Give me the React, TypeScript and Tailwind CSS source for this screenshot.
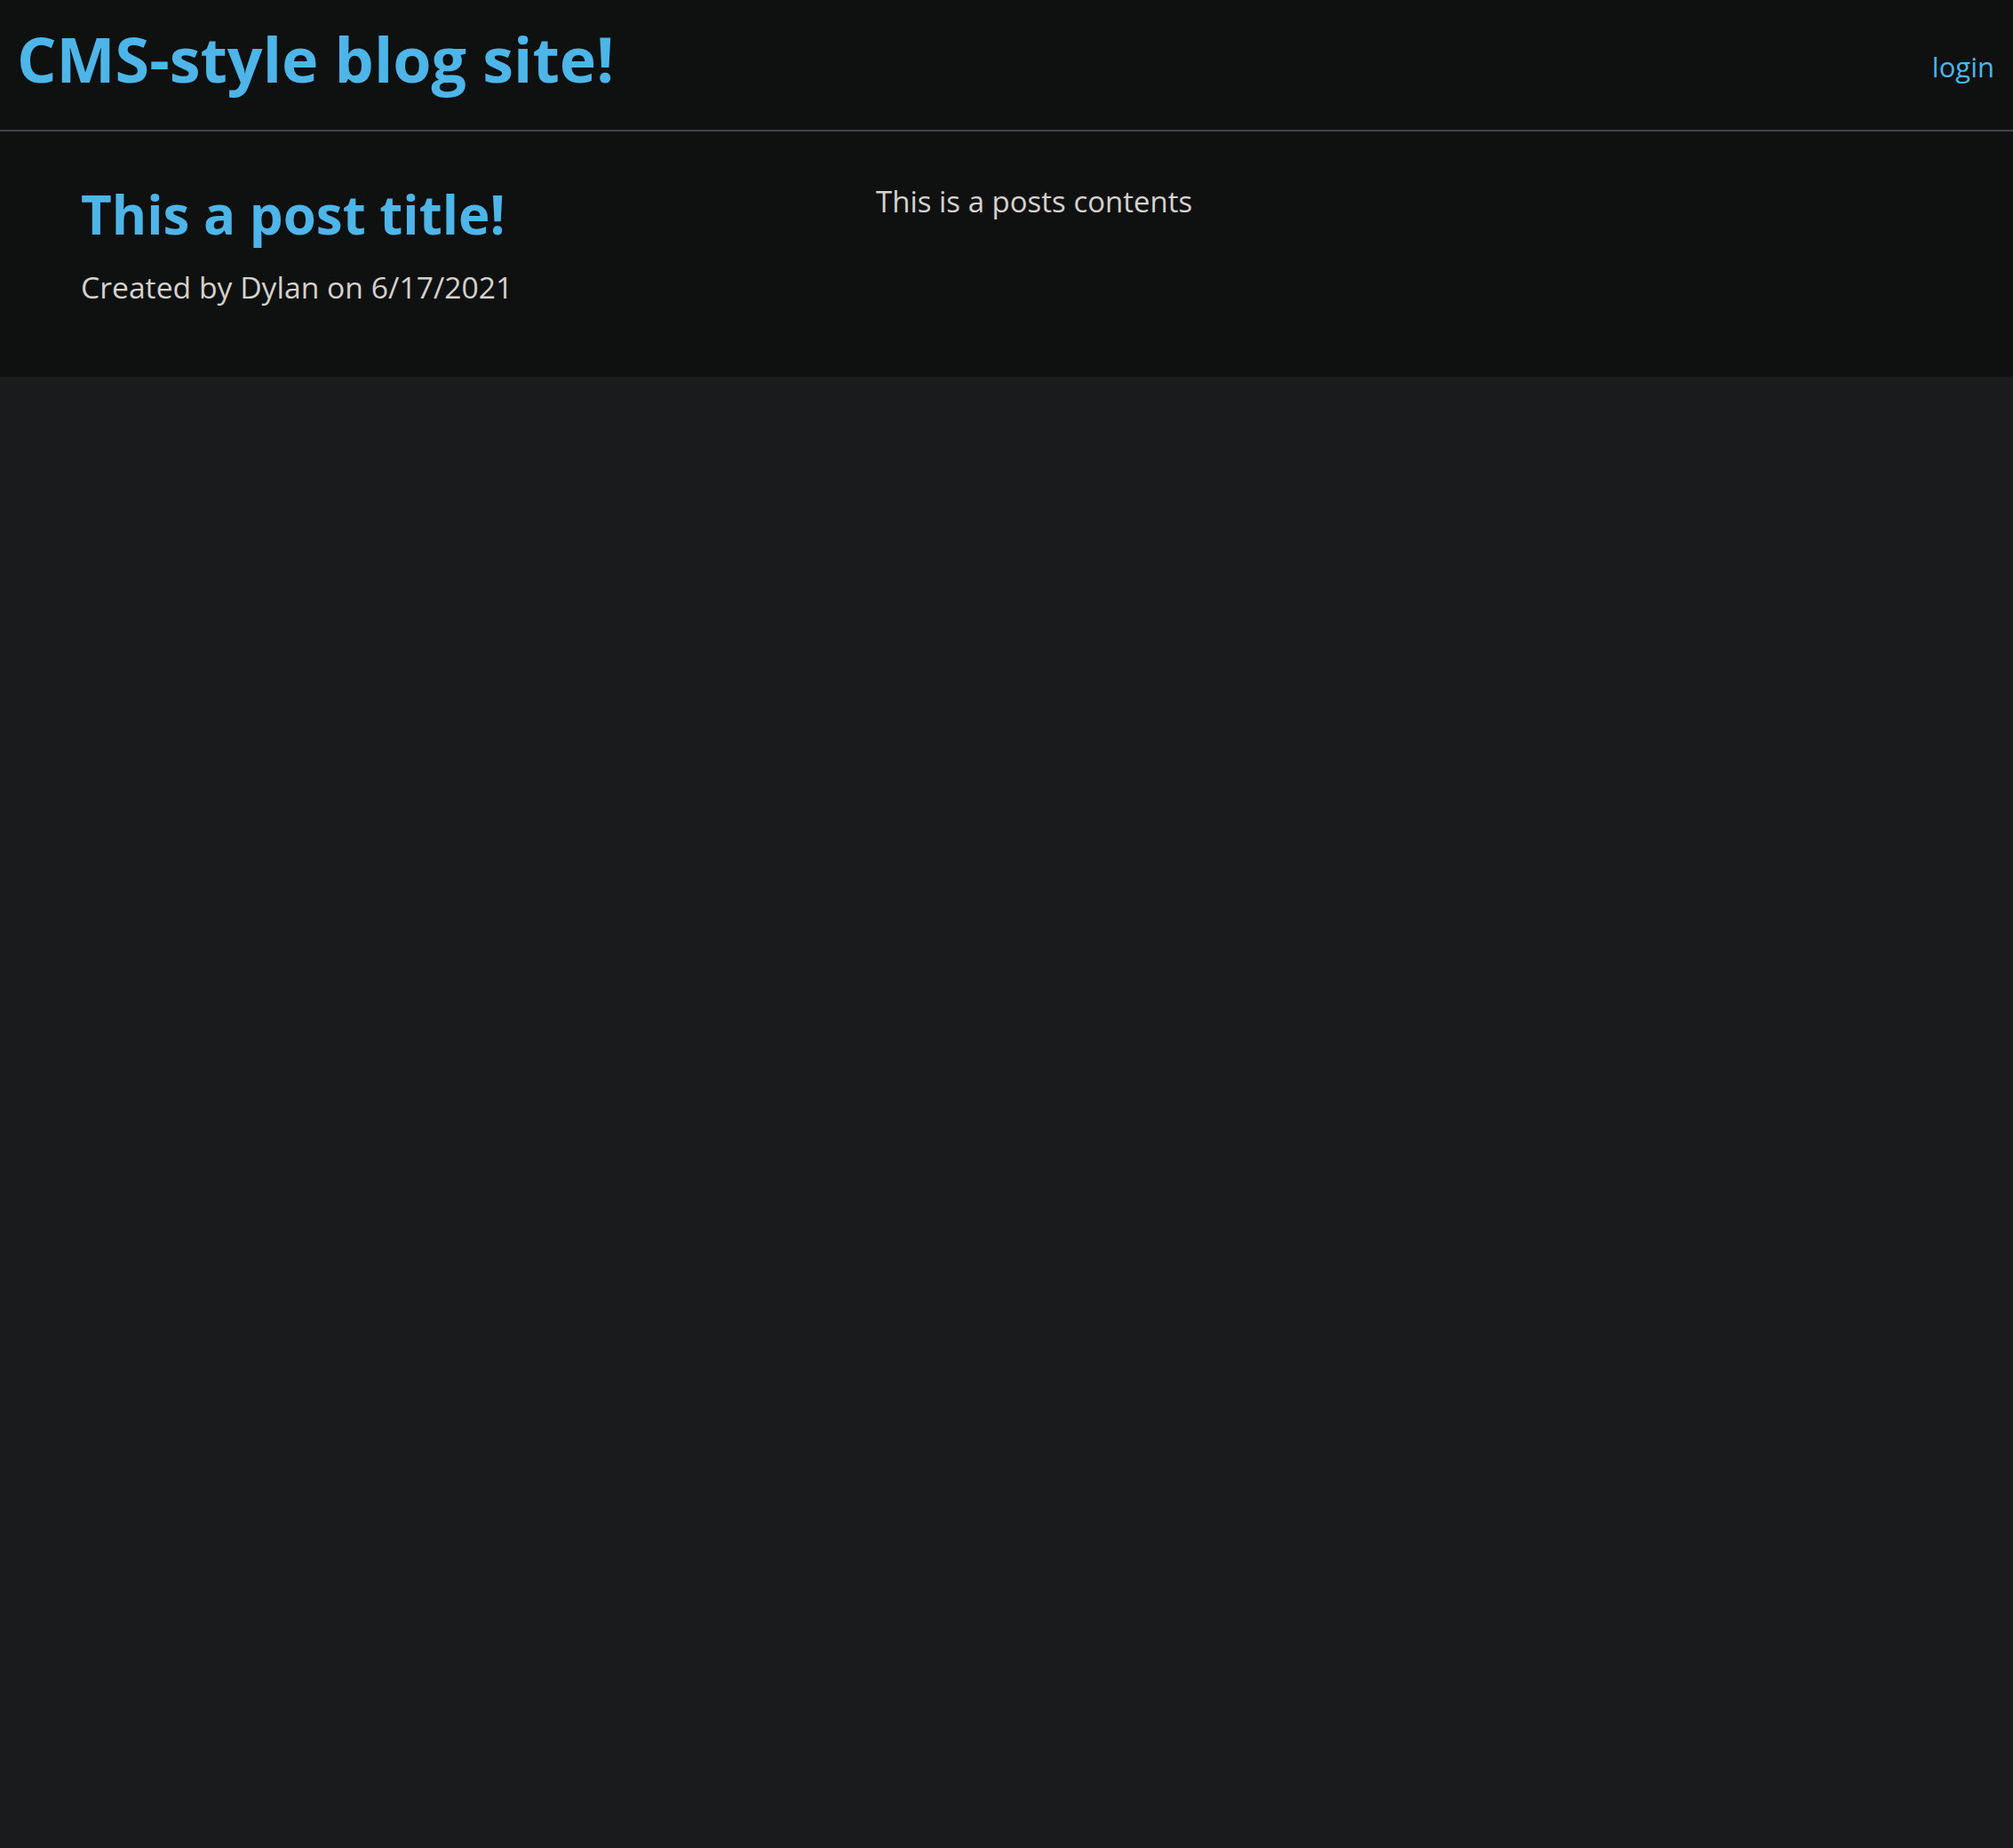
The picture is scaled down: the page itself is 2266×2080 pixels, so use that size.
export default function App() {
  return (
    <div className="min-h-[2080px] bg-[#1a1b1d]" style={{ fontFamily: '"Open Sans", "Noto Sans", sans-serif' }}>
      {/* header */}
      <header className="flex h-[148px] items-start justify-between border-b-2 border-[#3f4347] bg-[#0f1111] pl-[19px] pr-[21px]">
        <h1 className="mt-[31px] text-[70px] leading-[70px] font-bold text-[#4db5e8]">CMS-style blog site!</h1>
        <a className="mt-[60px] text-[31px] leading-[31px] text-[#4db5e8]">login</a>
      </header>
      {/* post */}
      <section className="flex h-[276px] items-start bg-[#0f1111] pl-[91px]">
        <div className="flex w-[895px] flex-col pt-[63px]">
          <h2 className="text-[60px] leading-[61px] font-bold text-[#4db5e8]">This a post title!</h2>
          <p className="mt-[34px] text-[33.7px] leading-[34px] text-[#d5d1cc]">Created by Dylan on 6/17/2021</p>
        </div>
        <div className="pt-[62px]">
          <p className="text-[33px] leading-[34px] text-[#d5d1cc]">This is a posts contents</p>
        </div>
      </section>
    </div>
  );
}
